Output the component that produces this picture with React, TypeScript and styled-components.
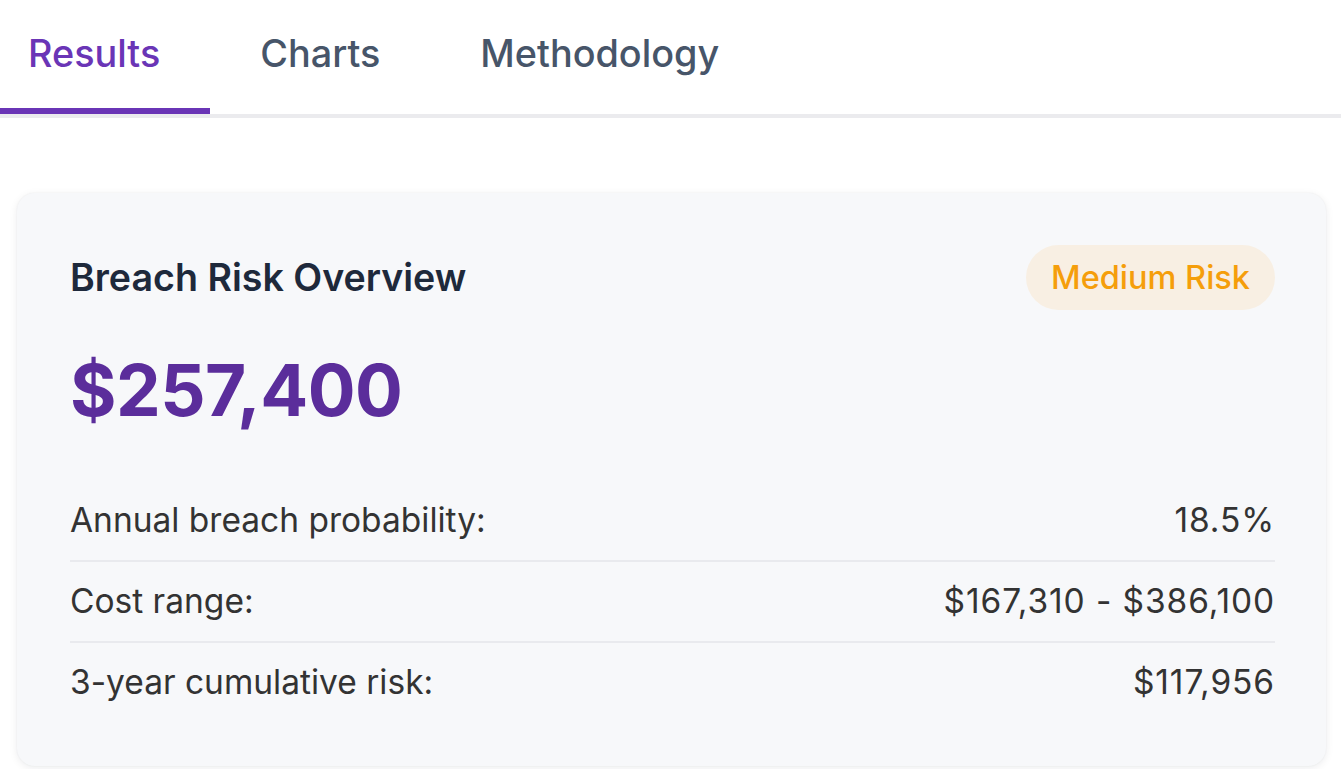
import React from "react";
import styled, { createGlobalStyle } from "styled-components";

const Global = createGlobalStyle`
  html, body { margin: 0; padding: 0; background: #ffffff; overflow: hidden; }
  body { font-family: Inter, "Noto Sans", "Liberation Sans", sans-serif; -webkit-font-smoothing: antialiased; }
  * { box-sizing: border-box; }
`;

const Page = styled.div`
  width: 1341px;
  height: 769px;
  overflow: hidden;
`;

const TabList = styled.div`
  display: flex;
  border-bottom: 4px solid #ebebee;
  margin-left: -22px;
`;

const Tab = styled.div<{ $active?: boolean }>`
  padding: 30px 50px 0;
  height: 114px;
  font-size: 37.8px;
  line-height: 46px;
  font-weight: 500;
  color: ${(p) => (p.$active ? "#6a35b6" : "#475569")};
  border-bottom: 6px solid ${(p) => (p.$active ? "#6a35b6" : "transparent")};
`;

const Card = styled.section`
  margin: 75px 15px 0 17px;
  background: #f7f8fa;
  border-radius: 18px;
  box-shadow: 0 2px 8px rgba(15, 23, 42, 0.08), 0 0 2px rgba(15, 23, 42, 0.06);
  padding: 52px 51px 44px 53px;
`;

const Header = styled.div`
  display: flex;
  align-items: center;
  justify-content: space-between;
`;

const Title = styled.h2`
  margin: 0;
  font-size: 37.6px;
  font-weight: 600;
  color: #1e293b;
`;

const Badge = styled.span`
  display: inline-flex;
  align-items: center;
  height: 65px;
  padding: 0 25px;
  border-radius: 999px;
  background: #f8efe3;
  color: #f59e0b;
  font-size: 32.5px;
  font-weight: 500;
`;

const Amount = styled.div`
  margin-top: 37px;
  font-size: 71px;
  line-height: 86px;
  font-weight: 700;
  color: #5b2d9b;
  letter-spacing: -0.5px;
`;

const Rows = styled.div`
  margin-top: 48px;
  display: flex;
  flex-direction: column;
`;

const Row = styled.div<{ $last?: boolean }>`
  display: flex;
  justify-content: space-between;
  align-items: center;
  padding: 20px 0;
  font-size: 33.5px;
  line-height: 39px;
  color: #333333;
  border-bottom: ${(p) => (p.$last ? "none" : "2px solid #e9eaee")};
`;

const Value = styled.span`
  letter-spacing: 0.9px;
`;

const rows = [
  { label: "Annual breach probability:", value: "18.5%" },
  { label: "Cost range:", value: "$167,310 - $386,100" },
  { label: "3-year cumulative risk:", value: "$117,956" },
];

export default function App() {
  return (
    <Page>
      <Global />
      <TabList>
        <Tab $active>Results</Tab>
        <Tab>Charts</Tab>
        <Tab>Methodology</Tab>
      </TabList>
      <Card>
        <Header>
          <Title>Breach Risk Overview</Title>
          <Badge>Medium Risk</Badge>
        </Header>
        <Amount>$257,400</Amount>
        <Rows>
          {rows.map((r, i) => (
            <Row key={r.label} $last={i === rows.length - 1}>
              <span>{r.label}</span>
              <Value>{r.value}</Value>
            </Row>
          ))}
        </Rows>
      </Card>
    </Page>
  );
}
